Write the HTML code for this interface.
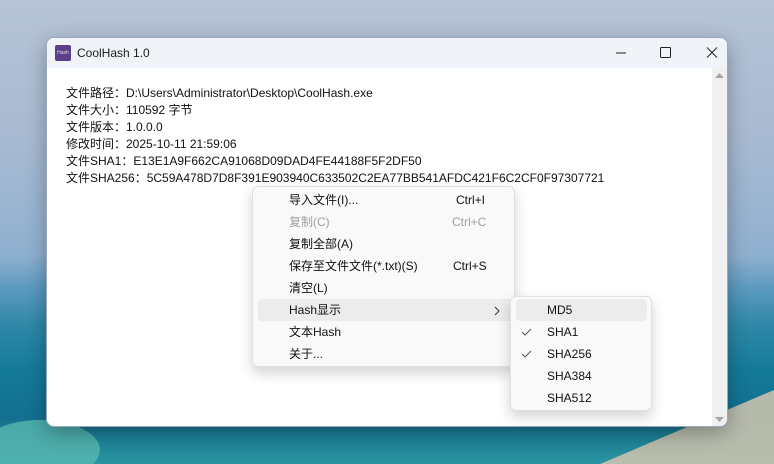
<!DOCTYPE html>
<html style="width:774px;height:464px;overflow:hidden"><head><meta charset="utf-8"><style>
*{margin:0;padding:0;box-sizing:border-box}
body{width:774px;height:464px;overflow:hidden;position:relative;font-family:"Liberation Sans","Noto Sans CJK SC",sans-serif;
background:linear-gradient(180deg,#b6c3d6 0%,#a8bad2 30%,#8fb0d0 55%,#5d9ac0 62%,#2f88a8 70%,#147a98 80%,#136f8f 90%,#2a95a0 100%);}
.bg{position:absolute;left:0;top:0}
.win{position:absolute;left:46px;top:37px;width:682px;height:390px;background:#fff;border-radius:8px;overflow:hidden;box-shadow:0 6px 20px rgba(0,0,0,.3);border:1px solid #9aa8bb}
.title{height:30px;background:#f0f4f9;position:relative;font-size:12px;color:#1a1a1a}
.icon{position:absolute;left:8px;top:7px;width:16px;height:16px;background:#5b3f8c;border-radius:2px;color:#ddd;font-size:5px;line-height:16px;text-align:center}
.tt{position:absolute;left:30px;top:8px}
.scroll{position:absolute;right:0;top:30px;width:15px;bottom:0;background:#f0f0f0}
.content{position:absolute;left:19px;top:47px;font-size:12px;line-height:17px;color:#111}
.menu{position:absolute;background:#f9f9f9;border:1px solid #e0e0e0;border-radius:6px;box-shadow:0 6px 14px rgba(0,0,0,.18);font-size:12px;color:#111}
.it{position:absolute;height:22px;line-height:22px}
.hl{position:absolute;background:#ececec;border-radius:4px}
</style></head><body>
<svg class="bg" width="774" height="464"><polygon points="600,464 774,390 774,464" fill="#c8c2ae" opacity=".9"/><ellipse cx="40" cy="450" rx="60" ry="30" fill="#58b8b0" opacity=".8"/></svg>
<div class="win">
<div class="title"><div class="icon">Hash</div><div class="tt">CoolHash 1.0</div>
<svg style="position:absolute;left:560px;top:8px" width="160" height="14">
<line x1="9" y1="7" x2="19" y2="7" stroke="#222" stroke-width="1"/>
<rect x="53.5" y="1.5" width="10" height="10" rx="1" fill="none" stroke="#222"/>
<path d="M100 1.5L110 11.5M110 1.5L100 11.5" stroke="#222"/>
</svg></div>
<div class="scroll"><svg width="15" height="360"><path d="M3 10L7.5 5L12 10Z" fill="#a6a6a6"/><path d="M3 349L7.5 354L12 349Z" fill="#a6a6a6"/></svg></div>
<div class="content">文件路径：D:\Users\Administrator\Desktop\CoolHash.exe<br>文件大小：110592 字节<br>文件版本：1.0.0.0<br>修改时间：2025-10-11 21:59:06<br>文件SHA1：E13E1A9F662CA91068D09DAD4FE44188F5F2DF50<br>文件SHA256：5C59A478D7D8F391E903940C633502C2EA77BB541AFDC421F6C2CF0F97307721</div>
</div>
<div class="menu" style="left:252px;top:186px;width:263px;height:181px">
<div class="hl" style="left:5px;top:112px;width:255px;height:22px"></div>
<div class="it" style="left:36px;top:2px">导入文件(I)...</div><div class="it" style="left:203px;top:2px">Ctrl+I</div>
<div class="it" style="left:36px;top:24px;color:#a0a0a0">复制(C)</div><div class="it" style="left:199px;top:24px;color:#a0a0a0">Ctrl+C</div>
<div class="it" style="left:36px;top:46px">复制全部(A)</div>
<div class="it" style="left:36px;top:68px">保存至文件文件(*.txt)(S)</div><div class="it" style="left:200px;top:68px">Ctrl+S</div>
<div class="it" style="left:36px;top:90px">清空(L)</div>
<div class="it" style="left:36px;top:112px">Hash显示</div>
<svg style="position:absolute;left:241px;top:119px" width="6" height="10"><path d="M1 1L5 5L1 9" fill="none" stroke="#333"/></svg>
<div class="it" style="left:36px;top:134px">文本Hash</div>
<div class="it" style="left:36px;top:156px">关于...</div>
</div>
<div class="menu" style="left:510px;top:296px;width:142px;height:115px">
<div class="hl" style="left:5px;top:2px;width:131px;height:22px"></div>
<div class="it" style="left:36px;top:2px">MD5</div>
<div class="it" style="left:36px;top:24px">SHA1</div>
<div class="it" style="left:36px;top:46px">SHA256</div>
<div class="it" style="left:36px;top:68px">SHA384</div>
<div class="it" style="left:36px;top:90px">SHA512</div>
<svg style="position:absolute;left:10px;top:31px" width="12" height="30"><path d="M1 4L4 7L10 1M1 26L4 29L10 23" fill="none" stroke="#555"/></svg>
</div>
</body></html>
